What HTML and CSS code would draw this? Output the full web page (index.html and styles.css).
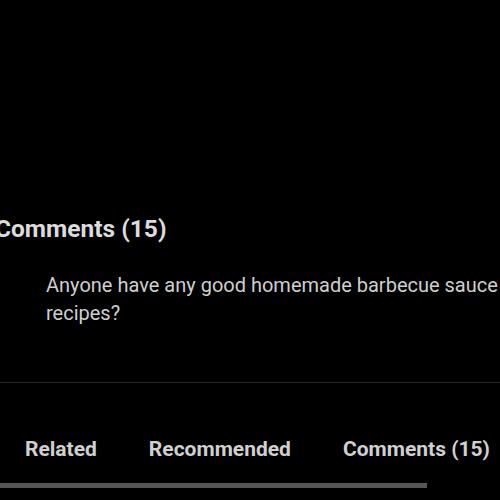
FILE: index.html
```html
<!DOCTYPE html>
<html>
<head>
<meta charset="utf-8">
<link rel="stylesheet" href="styles.css">
</head>
<body>
<div class="page">
  <div class="player"></div>
  <section class="comments">
    <h2 class="comments-title">Comments (15)</h2>
    <p class="comment-text">Anyone have any good homemade barbecue sauce recipes?</p>
  </section>
  <nav class="tabs">
    <div class="tab-row">
      <span class="tab">Related</span>
      <span class="tab">Recommended</span>
      <span class="tab">Comments (15)</span>
    </div>
    <div class="scrollbar"><div class="thumb"></div></div>
  </nav>
</div>
</body>
</html>
```
FILE: styles.css
```css
html, body {
  margin: 0;
  padding: 0;
  background: #000;
}
.page {
  width: 500px;
  height: 500px;
  overflow: hidden;
  display: flex;
  flex-direction: column;
  font-family: Roboto, "Liberation Sans", sans-serif;
}
.player {
  height: 210px;
  flex: none;
}
.comments {
  height: 173px;
  flex: none;
  border-bottom: 1px solid #262626;
  box-sizing: border-box;
}
.comments-title {
  margin: 0 0 0 -5px;
  font-size: 24.5px;
  font-weight: 700;
  color: #dcdcdc;
  line-height: 38px;
  white-space: nowrap;
}
.comment-text {
  margin: 23px 0 0 46px;
  font-size: 20px;
  line-height: 28px;
  color: #cfcfcf;
  width: 470px;
}
.tabs {
  display: flex;
  flex-direction: column;
}
.tab-row {
  display: flex;
  gap: 52px;
  padding: 52px 0 0 25px;
  white-space: nowrap;
}
.tab {
  font-size: 21px;
  font-weight: 700;
  color: #d0d0d0;
  line-height: 28px;
}
.scrollbar {
  margin-top: 20px;
  height: 5px;
}
.thumb {
  width: 427px;
  height: 5px;
  background: #555;
}
```
